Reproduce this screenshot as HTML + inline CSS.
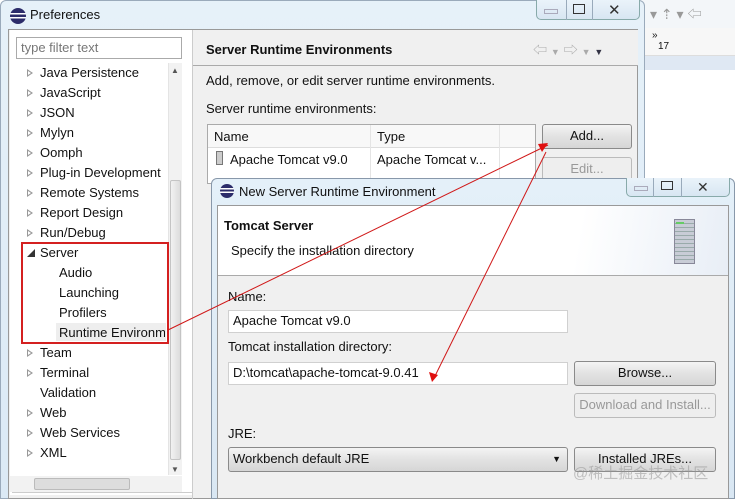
<!DOCTYPE html>
<html><head><meta charset="utf-8"><style>
*{margin:0;padding:0;box-sizing:border-box}
body{width:735px;height:499px;overflow:hidden;position:relative;background:#fff;font-family:"Liberation Sans","Noto Sans CJK SC",sans-serif;font-size:13px;color:#111}
.a{position:absolute}
.btn{position:absolute;border:1px solid #8a8a8a;border-radius:3px;background:linear-gradient(#f4f4f4,#e2e2e2 50%,#d6d6d6);text-align:center;line-height:22px}
.tri{position:absolute;width:0;height:0;border-left:6px solid #999;border-top:4px solid transparent;border-bottom:4px solid transparent}
.tri:after{content:"";position:absolute;left:-5px;top:-2px;border-left:3px solid #fff;border-top:2px solid transparent;border-bottom:2px solid transparent}
.ti{position:absolute;left:40px}
.inp{position:absolute;background:#fff;border:1px solid #d0d0d0;padding-left:4px;line-height:20px}
.cap{position:absolute;height:20px;border:1px solid #8aa;border-top:none;border-radius:0 0 5px 5px;background:linear-gradient(#eaf3fa,#d8e6f2)}
</style></head><body>
<div class="a" style="left:640px;top:0;width:95px;height:28px;background:#f3f6f9"></div>
<div class="a" style="left:640px;top:28px;width:95px;height:28px;background:#f7f7f7;border-bottom:1px solid #ddd"></div>
<div class="a" style="left:640px;top:56px;width:95px;height:14px;background:#dfe8f3"></div>
<div class="a" style="left:652px;top:30px;font-size:10px">»<br><span style="margin-left:6px">17</span></div>
<div class="a" style="left:650px;top:4px;color:#999;font-size:14px">▾ ⇡ ▾ ⇦</div>
<div class="a" style="left:0;top:0;width:645px;height:499px;background:linear-gradient(#e6f1f9,#dbe9f5);border:1px solid #9aaabb;border-radius:6px 6px 0 0"></div>
<div class="a" style="left:10px;top:8px;width:16px;height:16px;border-radius:50%;background:linear-gradient(#2c2c6a 0 30%,#fff 30% 40%,#2c2c6a 40% 55%,#fff 55% 65%,#2c2c6a 65%)"></div>
<div class="a" style="left:30px;top:7px;font-size:13px">Preferences</div>
<div class="cap" style="left:536px;top:0;width:104px"></div>
<div class="a" style="left:566px;top:0;height:20px;border-left:1px solid #9ab"></div>
<div class="a" style="left:592px;top:0;height:20px;border-left:1px solid #9ab"></div>
<div class="a" style="left:544px;top:9px;width:14px;height:5px;border:1px solid #aab"></div>
<div class="a" style="left:573px;top:4px;width:12px;height:10px;border:1px solid #333"></div>
<div class="a" style="left:608px;top:1px;font-size:15px;color:#333">✕</div>
<div class="a" style="left:8px;top:29px;width:630px;height:470px;background:#f0f0f0;border:1px solid #999"></div>
<div class="a" style="left:10px;top:30px;width:182px;height:465px;background:#fff"></div>
<div class="a" style="left:192px;top:30px;width:1px;height:469px;background:#ccc"></div>
<div class="inp" style="left:16px;top:37px;width:166px;height:22px;border-color:#aaa;color:#777">type filter text</div>
<div class="a" style="left:168px;top:63px;width:14px;height:412px;background:#f2f2f2;border-left:1px solid #e4e4e4"></div>
<div class="a" style="left:170px;top:180px;width:11px;height:280px;background:linear-gradient(90deg,#f2f2f2,#dcdcdc);border:1px solid #c4c4c4;border-radius:2px"></div>
<div class="a" style="left:171px;top:66px;font-size:8px;color:#555">▲</div>
<div class="a" style="left:171px;top:465px;font-size:8px;color:#555">▼</div>
<div class="a" style="left:10px;top:476px;width:172px;height:16px;background:#f2f2f2"></div>
<div class="a" style="left:34px;top:478px;width:96px;height:12px;background:#ddd;border:1px solid #bbb;border-radius:2px"></div>
<div class="a" style="left:12px;top:492px;width:180px;height:1px;background:#ccc"></div>
<div class="tri" style="left:27px;top:69px"></div><div class="ti" style="top:65px">Java Persistence</div>
<div class="tri" style="left:27px;top:89px"></div><div class="ti" style="top:85px">JavaScript</div>
<div class="tri" style="left:27px;top:109px"></div><div class="ti" style="top:105px">JSON</div>
<div class="tri" style="left:27px;top:129px"></div><div class="ti" style="top:125px">Mylyn</div>
<div class="tri" style="left:27px;top:149px"></div><div class="ti" style="top:145px">Oomph</div>
<div class="tri" style="left:27px;top:169px"></div><div class="ti" style="top:165px">Plug-in Development</div>
<div class="tri" style="left:27px;top:189px"></div><div class="ti" style="top:185px">Remote Systems</div>
<div class="tri" style="left:27px;top:209px"></div><div class="ti" style="top:205px">Report Design</div>
<div class="tri" style="left:27px;top:229px"></div><div class="ti" style="top:225px">Run/Debug</div>
<div class="a" style="left:27px;top:248px;font-size:8px;color:#333">◢</div><div class="ti" style="top:245px">Server</div>
<div class="ti" style="left:59px;top:265px">Audio</div>
<div class="ti" style="left:59px;top:285px">Launching</div>
<div class="ti" style="left:59px;top:305px">Profilers</div>
<div class="a" style="left:56px;top:323px;width:110px;height:18px;background:#eee"></div>
<div class="ti" style="left:59px;top:325px;width:106px;overflow:hidden;white-space:nowrap">Runtime Environm</div>
<div class="tri" style="left:27px;top:349px"></div><div class="ti" style="top:345px">Team</div>
<div class="tri" style="left:27px;top:369px"></div><div class="ti" style="top:365px">Terminal</div>
<div class="ti" style="top:385px">Validation</div>
<div class="tri" style="left:27px;top:409px"></div><div class="ti" style="top:405px">Web</div>
<div class="tri" style="left:27px;top:429px"></div><div class="ti" style="top:425px">Web Services</div>
<div class="tri" style="left:27px;top:449px"></div><div class="ti" style="top:445px">XML</div>
<div class="a" style="left:21px;top:242px;width:148px;height:102px;border:2px solid #d42020"></div>
<div class="a" style="left:193px;top:30px;width:445px;height:36px;background:#f0f0f0;border-bottom:1px solid #aaa"></div>
<div class="a" style="left:206px;top:42px;font-weight:bold;font-size:13px">Server Runtime Environments</div>
<div class="a" style="left:533px;top:40px;color:#aaa;font-size:14px">⇦ <span style="font-size:9px">▼</span> ⇨ <span style="font-size:9px">▼</span> <span style="font-size:9px;color:#334">▼</span></div>
<div class="a" style="left:206px;top:73px">Add, remove, or edit server runtime environments.</div>
<div class="a" style="left:206px;top:101px">Server runtime environments:</div>
<div class="a" style="left:207px;top:124px;width:329px;height:60px;background:#fff;border:1px solid #aaa"></div>
<div class="a" style="left:208px;top:125px;width:327px;height:23px;background:#f8f8f8;border-bottom:1px solid #ddd"></div>
<div class="a" style="left:370px;top:125px;width:1px;height:55px;background:#e4e4e4"></div>
<div class="a" style="left:499px;top:125px;width:1px;height:55px;background:#e4e4e4"></div>
<div class="a" style="left:214px;top:129px">Name</div>
<div class="a" style="left:377px;top:129px">Type</div>
<div class="a" style="left:216px;top:151px;width:7px;height:14px;background:#ccc;border:1px solid #777"></div>
<div class="a" style="left:230px;top:152px">Apache Tomcat v9.0</div>
<div class="a" style="left:377px;top:152px">Apache Tomcat v...</div>
<div class="btn" style="left:542px;top:124px;width:90px;height:25px">Add...</div>
<div class="btn" style="left:542px;top:157px;width:90px;height:25px;color:#999;background:#eee;border-color:#bbb">Edit...</div>
<div class="a" style="left:211px;top:178px;width:524px;height:321px;background:linear-gradient(#e4f0f9,#d9e7f3);border:1px solid #8898aa;border-radius:6px 6px 0 0"></div>
<div class="a" style="left:220px;top:184px;width:14px;height:14px;border-radius:50%;background:linear-gradient(#2c2c6a 0 30%,#fff 30% 40%,#2c2c6a 40% 55%,#fff 55% 65%,#2c2c6a 65%)"></div>
<div class="a" style="left:239px;top:184px;font-size:13px">New Server Runtime Environment</div>
<div class="cap" style="left:626px;top:178px;width:104px;height:19px"></div>
<div class="a" style="left:653px;top:178px;height:19px;border-left:1px solid #9ab"></div>
<div class="a" style="left:681px;top:178px;height:19px;border-left:1px solid #9ab"></div>
<div class="a" style="left:634px;top:186px;width:14px;height:5px;border:1px solid #aab"></div>
<div class="a" style="left:661px;top:181px;width:12px;height:9px;border:1px solid #333"></div>
<div class="a" style="left:697px;top:179px;font-size:14px;color:#333">✕</div>
<div class="a" style="left:217px;top:205px;width:512px;height:294px;background:#f0f0f0;border:1px solid #999"></div>
<div class="a" style="left:218px;top:206px;width:510px;height:70px;background:linear-gradient(100deg,#fff 70%,#e8eef6);border-bottom:1px solid #aaa"></div>
<div class="a" style="left:224px;top:218px;font-weight:bold;font-size:13px">Tomcat Server</div>
<div class="a" style="left:231px;top:243px">Specify the installation directory</div>
<div class="a" style="left:674px;top:219px;width:21px;height:45px;background:repeating-linear-gradient(#c8ccd6 0 3px,#9aa 3px 4px);border:1px solid #889"></div>
<div class="a" style="left:676px;top:222px;width:8px;height:2px;background:#6c6"></div>
<div class="a" style="left:228px;top:289px">Name:</div>
<div class="inp" style="left:228px;top:310px;width:340px;height:23px">Apache Tomcat v9.0</div>
<div class="a" style="left:228px;top:339px">Tomcat installation directory:</div>
<div class="inp" style="left:228px;top:362px;width:340px;height:23px">D:\tomcat\apache-tomcat-9.0.41</div>
<div class="btn" style="left:574px;top:361px;width:142px;height:25px">Browse...</div>
<div class="btn" style="left:574px;top:393px;width:142px;height:25px;color:#999;background:#eee;border-color:#bbb">Download and Install...</div>
<div class="a" style="left:228px;top:426px">JRE:</div>
<div class="btn" style="left:228px;top:447px;width:340px;height:25px;text-align:left;padding-left:4px">Workbench default JRE<span style="position:absolute;right:6px;font-size:9px">▼</span></div>
<div class="btn" style="left:574px;top:447px;width:142px;height:25px">Installed JREs...</div>
<div class="a" style="left:573px;top:462px;color:rgba(150,150,150,0.55);font-size:15px">@稀土掘金技术社区</div>
<svg class="a" style="left:0;top:0" width="735" height="499">
<line x1="168" y1="330" x2="548" y2="145" stroke="#d01818" stroke-width="1"/>
<polygon points="548,143 538,144 542,152" fill="#e01010"/>
<line x1="546" y1="152" x2="434" y2="378" stroke="#d01818" stroke-width="1"/>
<polygon points="432,382 429,372 438,375" fill="#e01010"/>
</svg>
</body></html>
